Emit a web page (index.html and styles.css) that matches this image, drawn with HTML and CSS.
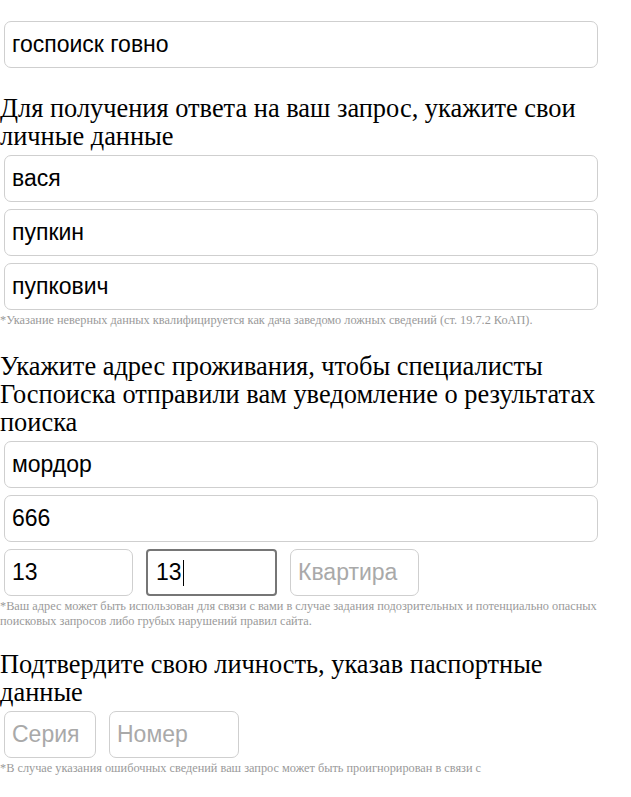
FILE: index.html
```html
<!DOCTYPE html>
<html lang="ru">
<head>
<meta charset="utf-8">
<title>Госпоиск</title>
<link rel="stylesheet" href="styles.css">
</head>
<body>
<div class="page">
  <div class="field field-wide first">госпоиск говно</div>

  <h2 class="title">Для получения ответа на ваш запрос, укажите свои личные данные</h2>
  <div class="stack">
    <div class="field field-wide">вася</div>
    <div class="field field-wide">пупкин</div>
    <div class="field field-wide">пупкович</div>
  </div>
  <p class="note">*Указание неверных данных квалифицируется как дача заведомо ложных сведений (ст. 19.7.2 КоАП).</p>

  <h2 class="title after-note">Укажите адрес проживания, чтобы специалисты Госпоиска отправили вам уведомление о результатах поиска</h2>
  <div class="stack">
    <div class="field field-wide">мордор</div>
    <div class="field field-wide">666</div>
    <div class="row">
      <div class="field w129">13</div>
      <div class="field w131 focus">13<span class="caret"></span></div>
      <div class="field w129 placeholder">Квартира</div>
    </div>
  </div>
  <p class="note">*Ваш адрес может быть использован для связи с вами в случае задания подозрительных и потенциально опасных поисковых запросов либо грубых нарушений правил сайта.</p>

  <h2 class="title after-long-note">Подтвердите свою личность, указав паспортные данные</h2>
  <div class="stack">
    <div class="row">
      <div class="field w92 placeholder">Серия</div>
      <div class="field w130 placeholder">Номер</div>
    </div>
  </div>
  <p class="note">*В случае указания ошибочных сведений ваш запрос может быть проигнорирован в связи с</p>
</div>
</body>
</html>
```

FILE: styles.css
```css
html, body {
  margin: 0;
  padding: 0;
  background: #fff;
}

.page {
  width: 602px;
  padding-top: 21px;
  font-family: "Liberation Serif", "Times New Roman", serif;
  color: #000;
}

.field {
  box-sizing: border-box;
  height: 47px;
  border: 1px solid #cfcfcf;
  border-radius: 7px;
  padding: 0 7px;
  display: flex;
  align-items: center;
  font-family: "Liberation Sans", Arial, sans-serif;
  font-size: 23px;
  color: #000;
  background: #fff;
  white-space: nowrap;
  overflow: hidden;
}

.field-wide {
  margin-left: 4px;
  width: 594px;
}

.stack {
  display: flex;
  flex-direction: column;
  gap: 7px;
}

.row {
  display: flex;
  gap: 13px;
  padding-left: 4px;
}

.w129 { width: 129px; }
.w131 { width: 131px; }
.w92 { width: 92px; }
.w130 { width: 130px; }

.focus {
  border: 2px solid #767676;
  border-radius: 4px;
  padding-left: 8px;
}

.caret {
  display: inline-block;
  width: 1px;
  height: 26px;
  background: #000;
  margin-left: 1px;
}

.placeholder {
  color: #a9a9a9;
}

.title {
  margin: 26px 0 5px 0;
  font-size: 26.4px;
  font-weight: normal;
  line-height: 28px;
}

.title.after-note {
  margin-top: 24px;
}

.title.after-long-note {
  margin-top: 21px;
}

.note {
  margin: 3px 0 0 0;
  font-size: 12.3px;
  line-height: 15px;
  color: #9a9a9a;
}
```
